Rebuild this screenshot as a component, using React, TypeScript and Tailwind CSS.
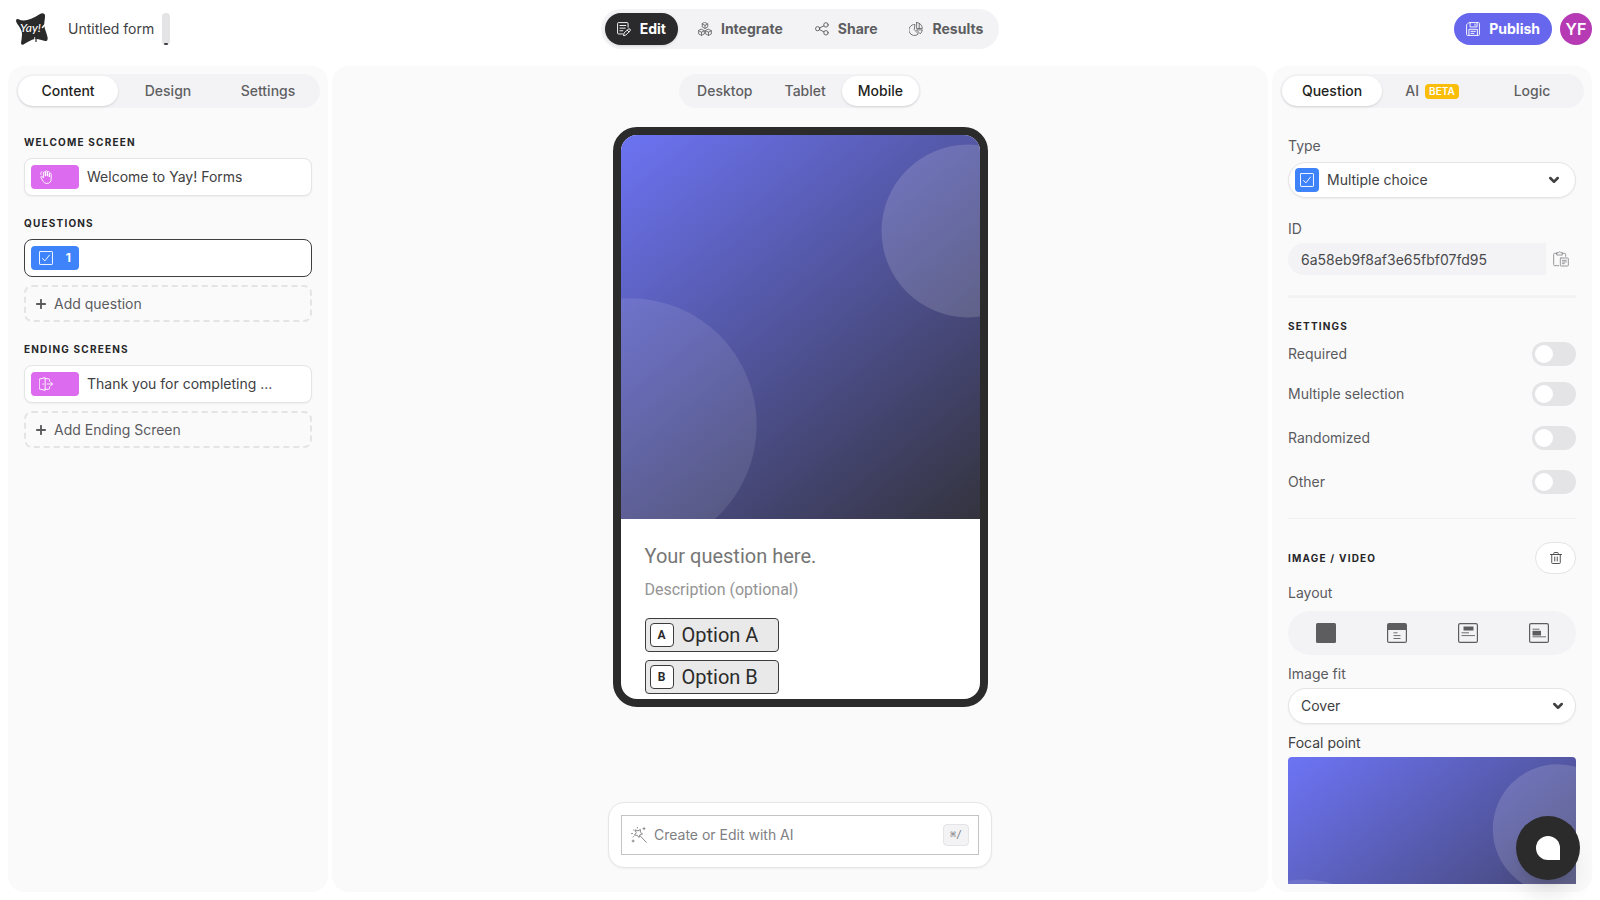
import { useState } from "react";
import type { ReactNode } from "react";

const Icon = ({ children, className = "size-3.5", width = 1.6 }: { children: ReactNode; className?: string; width?: number }) => (
  <svg
    viewBox="0 0 24 24"
    fill="none"
    stroke="currentColor"
    strokeWidth={width}
    strokeLinecap="round"
    strokeLinejoin="round"
    className={`${className} shrink-0`}
    aria-hidden="true"
  >
    {children}
  </svg>
);

const EditIcon = () => (
  <Icon>
    <path d="M9.500 20.500H2.500a1.500 1.500 0 0 1-1.500-1.500V2.500a1.500 1.500 0 0 1 1.500-1.500h15A1.500 1.500 0 0 1 19 2.500V9" />
    <path d="M5 6h10M5 10.500h9M5 15h5" />
    <path d="M12 19.500l-1 4 4-1 7.300-7.300a2.100 2.100 0 0 0-3-3zM17.500 14l3 3" />
  </Icon>
);

const IntegrateIcon = () => (
  <Icon width={1.4}>
    <path d="M12 .8l4.700 2.500v5.200L12 11 7.300 8.500V3.300zM7.300 3.300 12 5.800l4.700-2.500M12 5.800V11" />
    <path d="M6 12.500l4.900 2.500v5.500L6 23l-4.900-2.500V15zM1.100 15 6 17.500l4.900-2.500M6 17.500V23" />
    <path d="M18 12.500l4.900 2.500v5.500L18 23l-4.900-2.500V15zM13.100 15l4.900 2.500 4.900-2.500M18 17.500V23" />
  </Icon>
);

const ShareIcon = () => (
  <Icon>
    <circle cx="4.500" cy="11.500" r="3.600" />
    <circle cx="18.800" cy="5" r="3.800" />
    <circle cx="18.800" cy="18.500" r="3.800" />
    <path d="M8 10l7-3.300M8 13.200l7.200 3.600" />
  </Icon>
);

const ResultsIcon = () => (
  <Icon width={1.4}>
    <path d="M9.500 4.200a9.500 9.500 0 1 0 6.500 16.300L9.500 13.500z" />
    <path d="M13 .8v10.400h9.800A10.200 10.200 0 0 0 13 .8z" />
    <path d="M13.500 13.500h9.300a9.300 9.300 0 0 1-3 6.300z" />
    <path d="M17.500 2.500v8.500" />
  </Icon>
);

const SaveIcon = () => (
  <Icon>
    <path d="M5.500 1H21.500A1.500 1.500 0 0 1 23 2.500v19a1.500 1.500 0 0 1-1.500 1.500h-19A1.500 1.500 0 0 1 1 21.500V5.500z" />
    <path d="M7 1v7.500h12V1M15.500 3.500v2.500M5 23V12.500h14.500V23M8.500 16H16M8.500 19.500h5" />
  </Icon>
);

const CheckIcon = () => (
  <Icon>
    <rect x="0.900" y="0.900" width="22.200" height="22.200" rx="1" />
    <path d="M6 12.800l4 4.200L18 7" />
  </Icon>
);

const HandIcon = () => (
  <Icon>
    <path d="M7.500 13V5a1.700 1.700 0 0 1 3.400 0v5.500V3a1.700 1.700 0 0 1 3.400 0v7.500V4.200a1.700 1.700 0 0 1 3.400 0V12V7.200a1.600 1.600 0 0 1 3.200 0V15c0 5-2.600 8-7.300 8-3.300 0-5-1.300-6.400-3.600l-4-6.600c-.9-1.700 1.200-2.900 2.500-1.600z" />
    <path d="M3 7.500C3 5 3.800 3.500 5 2.500" />
  </Icon>
);

const DoorIcon = () => (
  <Icon>
    <path d="M1 3.500 10.500 1v22L1 20.500zM7 11.500v1.500" />
    <path d="M10.500 3h6A1.500 1.500 0 0 1 18 4.500V7M10.500 21h6a1.500 1.500 0 0 0 1.500-1.500V17" />
    <path d="M14 12h9M19.500 8.500 23 12l-3.500 3.500" />
  </Icon>
);

const PasteIcon = () => (
  <Icon className="size-4" width={1.3}>
    <path d="M8.500 22H2.500A1.500 1.500 0 0 1 1 20.500V5a1.500 1.500 0 0 1 1.500-1.500H6M14 3.500h3.500A1.500 1.500 0 0 1 19 5v3" />
    <path d="M6 2.500h2.200a1.900 1.900 0 0 1 3.600 0H14V6H6z" />
    <rect x="11" y="10.500" width="12" height="12" rx="1" />
    <path d="M14 14h6M14 16.500h6M14 19h3" />
  </Icon>
);

const TrashIcon = () => (
  <Icon className="size-3" width={1.9}>
    <path d="M1 5h22M3.500 5v16.500A1.500 1.500 0 0 0 5 23h14a1.500 1.500 0 0 0 1.500-1.500V5M7.500 5V2.500A1.500 1.500 0 0 1 9 1h6a1.500 1.500 0 0 1 1.500 1.500V5M9.500 10v8M14.500 10v8" />
  </Icon>
);

const WandIcon = () => (
  <Icon className="size-4" width={1.4}>
    <path d="M6.500 4.500l4 1.300 3.500-2.300v4.300l3.300 2.600-4 1.400-1.300 4-2.600-3.400-4.200-.1 2.400-3.400zM13.500 13l9.500 10" />
    <path d="M19.500.900v3M18 2.400h3M3.200 19.500v3M1.700 21h3M9.500.600v1M.8 9.800h1.500M3.800 4.500l.8.700M3 15l.8-.6" />
  </Icon>
);

const PlusIcon = () => (
  <Icon className="size-2.5" width={4.5}>
    <path d="M12 2v20M2 12h20" />
  </Icon>
);

const Chevron = ({ className }: { className: string }) => (
  <Icon className={`${className} pointer-events-none absolute top-1/2 size-3 -translate-y-1/2`} width={5}>
    <path d="M4.500 8 12 15.500 19.500 8" />
  </Icon>
);

const Logo = () => (
  <svg viewBox="0 0 32 32" className="size-8 shrink-0" role="img" aria-label="Yay! Forms">
    <path
      d="M2.500 6.300C8 9 15 7 24 1c2-1.400 4.800-1 5 1.500.2 3-1.200 7.500-.6 11 .6 3.500 2.400 7 3.200 11 .4 2.600-.8 4-3.400 3.300-3-.8-6-2.200-9.200-1.700-4 .6-7.800 3.500-11.500 5.300-1.800.8-2.700 0-2.400-2 .6-4.400 1.600-8.400.2-12C4.200 13.800 1 11.500.2 8.700-.3 6.800.8 5.600 2.500 6.300z"
      fill="#2a2a2a"
    />
    <path d="M32 8 26.500 14.500" stroke="#fff" strokeWidth="1.500" strokeLinecap="round" />
    <path d="M18.800 24.500v3.500" stroke="#fff" strokeWidth="1" strokeLinecap="round" />
    <path d="M20 24v5" stroke="#2a2a2a" strokeWidth="1.200" />
    <text x="4" y="18.500" fill="#fff" fontSize="12" fontStyle="italic" fontWeight="500" fontFamily="Lato, sans-serif">
      Yay!
    </text>
  </svg>
);

const Artwork = ({ id, className }: { id: string; className: string }) => (
  <svg viewBox="0 0 1000 1000" preserveAspectRatio="xMidYMid slice" className={className} aria-hidden="true">
    <defs>
      <linearGradient id={id} x1="0" y1="0" x2="0.88" y2="1.1">
        <stop offset="0" stopColor="#6d74f5" />
        <stop offset="1" stopColor="#33323b" />
      </linearGradient>
    </defs>
    <rect width="1000" height="1000" fill={`url(#${id})`} />
    <circle cx="936" cy="250" r="225" fill="#fff" fillOpacity="0.15" />
    <circle cx="56" cy="755" r="330" fill="#fff" fillOpacity="0.1" />
  </svg>
);

const navItems = [
  { name: "Edit", icon: <EditIcon /> },
  { name: "Integrate", icon: <IntegrateIcon /> },
  { name: "Share", icon: <ShareIcon /> },
  { name: "Results", icon: <ResultsIcon /> },
];

const Header = () => (
  <header className="grid h-[58px] grid-cols-[1fr_auto_1fr] items-center px-2">
    <div className="flex items-center pl-2">
      <Logo />
      <input
        aria-label="Form name"
        defaultValue="Untitled form"
        className="ml-5 field-sizing-content bg-transparent text-sm text-[#404042] outline-none"
      />
      <span className="ml-2 flex h-8 w-2 items-end justify-center rounded-sm bg-[#e4e4e7]">
        <span className="h-0.5 w-1 rounded-full bg-[#3f3f46]" />
      </span>
    </div>
    <nav className="flex gap-2 rounded-full bg-[#f3f3f6] p-1">
      {navItems.map((item, i) => (
        <a
          key={item.name}
          href="#"
          className={
            i === 0
              ? "flex h-8 items-center gap-[9px] rounded-full bg-[#2a2a2c] px-3 text-sm font-bold text-white shadow-sm"
              : "flex h-8 items-center gap-[9px] rounded-full px-3 text-sm font-bold text-[#5d5d60]"
          }
        >
          {item.icon}
          {item.name}
        </a>
      ))}
    </nav>
    <div className="flex items-center justify-end gap-2">
      <button type="button" className="flex h-8 items-center gap-[9px] rounded-full bg-[#6767ee] px-3 text-sm font-bold text-white">
        <SaveIcon />
        Publish
      </button>
      <button type="button" className="size-8 rounded-full bg-[#b63ab4] text-base font-semibold text-white">
        YF
      </button>
    </div>
  </header>
);

const tabActive = "flex h-[30px] items-center justify-center gap-1.5 rounded-full bg-white px-4 text-sm font-medium text-[#1f1f21] shadow-sm";
const tabIdle = "flex h-[30px] items-center justify-center gap-1.5 rounded-full px-4 text-sm font-medium text-[#5f5f62]";

const Tabs = ({ items, initial, className, beta }: { items: string[]; initial: string; className: string; beta?: string }) => {
  const [active, setActive] = useState(initial);

  return (
    <div className={`${className} rounded-full bg-[#f3f3f6] p-0.5`}>
      {items.map((item) => (
        <button key={item} type="button" onClick={() => setActive(item)} className={active === item ? tabActive : tabIdle}>
          {item}
          {beta === item && (
            <span className="rounded-sm bg-[#fabe0a] px-1 text-[10px] leading-[15px] font-semibold text-white">BETA</span>
          )}
        </button>
      ))}
    </div>
  );
};

const Heading = ({ children }: { children: ReactNode }) => (
  <h2 className="text-[10px] leading-[15px] font-bold tracking-[0.12em] text-[#262628]">{children}</h2>
);

const AddButton = ({ children }: { children: ReactNode }) => (
  <button
    type="button"
    className="mt-2 flex h-[37px] w-full items-center gap-2 rounded-lg border-2 border-dashed border-[#e4e4e6] px-2.5 text-sm text-[#5b5b5e]"
  >
    <PlusIcon />
    {children}
  </button>
);

const card = "mt-2 flex h-[38px] w-full items-center gap-2 rounded-lg border bg-white px-1.5 text-left text-sm text-[#404042]";

const ContentPanel = () => (
  <aside className="flex w-80 shrink-0 flex-col rounded-2xl bg-[#fafafb] p-2">
    <Tabs items={["Content", "Design", "Settings"]} initial="Content" className="grid grid-cols-3" />
    <div className="mt-[27px] flex flex-col gap-5 px-2">
      <section>
        <Heading>WELCOME SCREEN</Heading>
        <button type="button" className={`${card} border-[#e4e4e6] shadow-xs`}>
          <span className="flex h-6 w-12 items-center rounded-sm bg-[#dd6bef] pl-2 text-white">
            <HandIcon />
          </span>
          <span className="truncate">Welcome to Yay! Forms</span>
        </button>
      </section>
      <section>
        <Heading>QUESTIONS</Heading>
        <button type="button" aria-label="Question 1" className={`${card} border-[#3f3f42]`}>
          <span className="flex h-6 w-12 items-center justify-between rounded-sm bg-[#3f83fb] px-2 text-xs font-bold text-white">
            <CheckIcon />1
          </span>
        </button>
        <AddButton>Add question</AddButton>
      </section>
      <section>
        <Heading>ENDING SCREENS</Heading>
        <button type="button" className={`${card} border-[#e4e4e6] shadow-xs`}>
          <span className="flex h-6 w-12 items-center rounded-sm bg-[#dd6bef] pl-2 text-white">
            <DoorIcon />
          </span>
          <span>Thank you for completing ...</span>
        </button>
        <AddButton>Add Ending Screen</AddButton>
      </section>
    </div>
  </aside>
);

const Preview = () => (
  <main className="flex min-w-0 flex-1 flex-col items-center rounded-2xl bg-[#fafafb] pt-2 pb-6">
    <Tabs items={["Desktop", "Tablet", "Mobile"]} initial="Mobile" className="flex" />
    <div className="mt-[19px] h-[580px] w-[375px] overflow-hidden rounded-3xl border-8 border-[#2b2b2b] bg-white font-[Roboto,sans-serif]">
      <Artwork id="hero" className="block h-96 w-full" />
      <div className="px-6 pt-[23px]">
        <h1 className="text-xl leading-7 text-[#767676]">Your question here.</h1>
        <p className="mt-1.5 text-base leading-7 text-[#949494]">Description (optional)</p>
        <div className="mt-3.5 flex flex-col items-start gap-2">
          {["A", "B"].map((letter) => (
            <button
              key={letter}
              type="button"
              className="flex h-[34px] w-[134px] items-center gap-2 rounded-sm border border-[#3c3c3c] bg-[#e9e9e9] px-1 text-xl text-[#2b2b2b]"
            >
              <span className="flex size-6 items-center justify-center rounded-sm border border-[#3c3c3c] bg-white text-xs font-bold">
                {letter}
              </span>
              Option {letter}
            </button>
          ))}
        </div>
      </div>
    </div>
    <div className="mt-auto w-96 rounded-2xl border border-[#e6e6e8] bg-white p-3 shadow-xs">
      <button type="button" className="flex h-10 w-full items-center gap-[7px] border border-[#c4c4c6] px-[9px] text-sm text-[#808083]">
        <WandIcon />
        Create or Edit with AI
        <kbd className="ml-auto rounded-sm border border-[#e4e4e7] bg-[#f3f3f5] px-1.5 font-['DejaVu_Sans_Mono',monospace] text-[10px] leading-5">
          ⌘/
        </kbd>
      </button>
    </div>
  </main>
);

const switches = [
  { id: "required", label: "Required", row: "mt-2" },
  { id: "multiple", label: "Multiple selection", row: "mt-4" },
  { id: "randomized", label: "Randomized", row: "mt-5" },
  { id: "other", label: "Other", row: "mt-5" },
];

const layouts = [
  {
    name: "Background",
    drawing: <rect width="20" height="20" rx="1.500" fill="currentColor" />,
  },
  {
    name: "Header",
    drawing: (
      <>
        <rect x=".6" y=".6" width="18.800" height="18.800" rx="1.500" fill="none" stroke="currentColor" strokeWidth="1.200" />
        <path d="M1 1h18v6H1z" fill="currentColor" />
        <path d="M6.500 9.800h4M6.500 12.600h7M6.500 15.500h7" stroke="currentColor" strokeWidth=".9" />
      </>
    ),
  },
  {
    name: "Above question",
    drawing: (
      <>
        <rect x=".6" y=".6" width="18.800" height="18.800" rx="1.500" fill="none" stroke="currentColor" strokeWidth="1.200" />
        <path d="M5.500 3.500h10v4h-10z" fill="currentColor" />
        <path d="M3.500 9.800H11M3.500 12.600h13.500" stroke="currentColor" strokeWidth=".9" />
      </>
    ),
  },
  {
    name: "Below question",
    drawing: (
      <>
        <rect x=".6" y=".6" width="18.800" height="18.800" rx="1.500" fill="none" stroke="currentColor" strokeWidth="1.200" />
        <path d="M3.500 7.800h8.500v4.700H3.500z" fill="currentColor" />
        <path d="M3.500 6.200h7M3.500 13.800h13.500" stroke="currentColor" strokeWidth=".9" />
      </>
    ),
  },
];

const label = "block text-sm leading-5 text-[#5b5b5e]";

const QuestionPanel = () => (
  <aside className="flex w-80 shrink-0 flex-col rounded-2xl bg-[#fafafb] p-2">
    <Tabs items={["Question", "AI", "Logic"]} initial="Question" beta="AI" className="grid grid-cols-3" />
    <div className="min-h-0 flex-1 overflow-hidden px-2 pt-7">
      <label htmlFor="type" className={label}>
        Type
      </label>
      <div className="relative mt-1.5 flex items-center text-[#404042]">
        <span className="pointer-events-none absolute left-[7px] flex size-6 items-center justify-center rounded-sm bg-[#3f83fb] text-white">
          <CheckIcon />
        </span>
        <select
          id="type"
          className="h-9 w-full appearance-none rounded-full border border-[#e4e4e6] bg-white pr-9 pl-[38px] text-sm shadow-xs"
        >
          <option>Multiple choice</option>
        </select>
        <Chevron className="right-4" />
      </div>

      <label htmlFor="question-id" className={`${label} mt-[21px]`}>
        ID
      </label>
      <div className="mt-1 flex items-center">
        <input
          id="question-id"
          readOnly
          value="6a58eb9f8af3e65fbf07fd95"
          className="h-8 min-w-0 flex-1 rounded-l-full rounded-r-sm bg-[#f3f3f6] px-[13px] text-sm text-[#4a4a4c] outline-none"
        />
        <button type="button" aria-label="Copy ID" className="px-[7px] text-[#8a8a8d]">
          <PasteIcon />
        </button>
      </div>

      <div className="mt-5 mb-[21px] h-[3px] bg-[#f3f3f5]" />

      <Heading>SETTINGS</Heading>
      {switches.map((item) => (
        <div key={item.id} className={`${item.row} flex items-center justify-between`}>
          <label htmlFor={item.id} className={label}>
            {item.label}
          </label>
          <input
            id={item.id}
            type="checkbox"
            role="switch"
            className="flex h-6 w-11 appearance-none items-center rounded-full bg-[#e4e4e7] px-[3px] before:size-[18px] before:rounded-full before:bg-white before:content-[''] checked:justify-end checked:bg-[#6767ee]"
          />
        </div>
      ))}

      <hr className="mt-6 border-[#f0f0f2]" />

      <div className="mt-[23px] flex items-center justify-between">
        <Heading>IMAGE / VIDEO</Heading>
        <button
          type="button"
          aria-label="Remove image"
          className="flex h-8 w-[41px] items-center justify-center rounded-full border border-[#e4e4e6] bg-white text-[#4a4a4c]"
        >
          <TrashIcon />
        </button>
      </div>

      <p className={`${label} mt-[9px]`}>Layout</p>
      <div className="mt-2 grid h-11 grid-cols-4 rounded-full bg-[#f3f3f6] p-0.5 text-[#5d5d60]">
        {layouts.map((item) => (
          <button key={item.name} type="button" aria-label={item.name} className="flex items-center justify-center">
            <svg viewBox="0 0 20 20" className="size-5">
              {item.drawing}
            </svg>
          </button>
        ))}
      </div>

      <label htmlFor="fit" className={`${label} mt-[9px]`}>
        Image fit
      </label>
      <div className="relative mt-1 text-[#404042]">
        <select id="fit" className="h-9 w-full appearance-none rounded-full border border-[#e4e4e6] bg-white px-3 text-sm shadow-xs">
          <option>Cover</option>
        </select>
        <Chevron className="right-3" />
      </div>

      <p className="mt-[9px] text-sm text-[#404042]">Focal point</p>
      <Artwork id="focal" className="mt-1 block aspect-square w-full rounded-t-sm" />
    </div>
  </aside>
);

export default function App() {
  return (
    <div className="flex h-screen flex-col bg-white font-[Inter,sans-serif]">
      <Header />
      <div className="flex min-h-0 flex-1 gap-1 p-2">
        <ContentPanel />
        <Preview />
        <QuestionPanel />
      </div>
      <button
        type="button"
        aria-label="Open chat"
        className="fixed right-5 bottom-5 flex size-16 items-center justify-center rounded-full bg-[#2b2b2b] shadow-xl"
      >
        <span className="size-6 rounded-full rounded-br-xs bg-white" />
      </button>
    </div>
  );
}
